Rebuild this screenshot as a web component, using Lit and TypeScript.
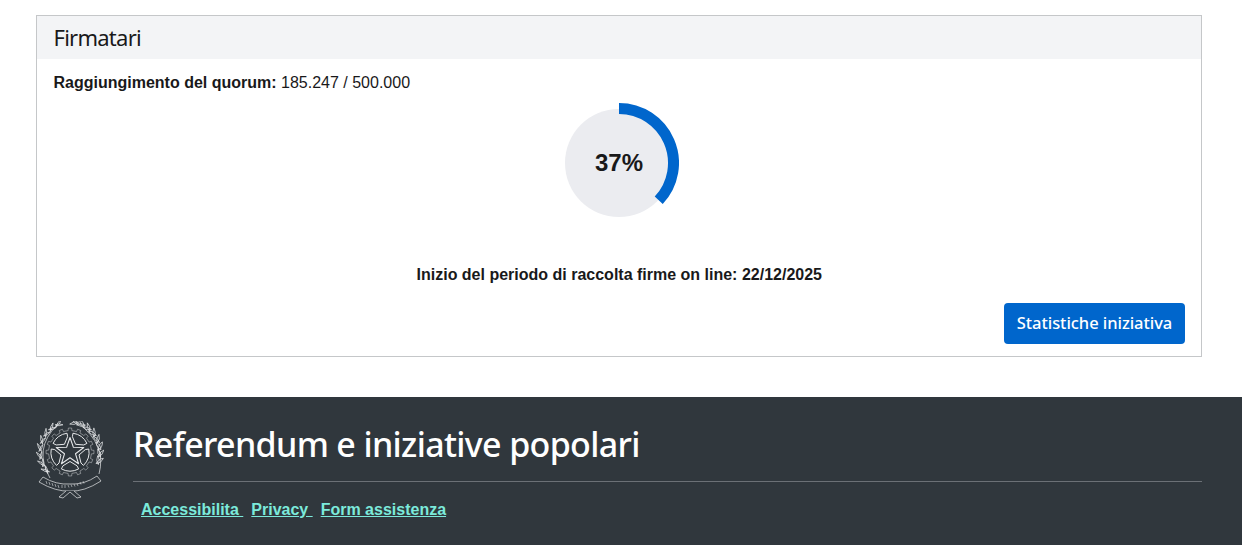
import { LitElement, html, css, svg } from "lit";
import { customElement } from "lit/decorators.js";

function arcPath(cx: number, cy: number, r: number, pct: number) {
  const a = (pct / 100) * Math.PI * 2;
  const x = cx + r * Math.sin(a);
  const y = cy - r * Math.cos(a);
  return `M ${cx} ${cy - r} A ${r} ${r} 0 ${pct > 50 ? 1 : 0} 1 ${x.toFixed(2)} ${y.toFixed(2)}`;
}

const CX = 34;
const CY = 31;
function polar(deg: number, r: number): string {
  const a = (deg * Math.PI) / 180;
  return `${(CX + r * Math.sin(a)).toFixed(2)} ${(CY - r * Math.cos(a)).toFixed(2)}`;
}

function starPath(R: number, r: number) {
  const pts: string[] = [];
  for (let i = 0; i < 10; i++) pts.push(polar(i * 36, i % 2 ? r : R));
  return `M${pts.join(" L")}z`;
}

function cellPath(gap: number) {
  return `M${polar(gap, 9.5)} L${polar(gap - 27, 15.5)} L${polar(gap - 27, 19)} Q${polar(gap, 21.5)} ${polar(gap + 27, 19)} L${polar(gap + 27, 15.5)}z`;
}

function gearPath() {
  const pts: string[] = [];
  const n = 16;
  for (let i = 0; i < n; i++) {
    const s = (360 / n) * i;
    pts.push(polar(s - 5, 21.5), polar(s - 4, 24), polar(s + 4, 24), polar(s + 5, 21.5));
  }
  return `M${pts.join(" L")}z`;
}

function leaf(deg: number, r: number, tilt: number, len: number, w: number) {
  const a = polar(deg, r).split(" ");
  return svg`<path transform="translate(${a[0]} ${a[1]}) rotate(${deg + tilt})" d="M0 0 Q${w} ${-len / 2} 0 ${-len} Q${-w} ${-len / 2} 0 0z"></path>`;
}

function emblem() {
  const left: number[] = [];
  for (let d = 226; d <= 336; d += 15) left.push(d);
  const right: number[] = [];
  for (let d = 16; d <= 122; d += 14) right.push(d);
  return svg`<svg class="emblem" width="68" height="78" viewBox="0 0 68 78" fill="none" stroke="#e6e8ea" stroke-width="0.7" stroke-linejoin="round" aria-hidden="true">
    <path d="M14 57 Q-3 28 21 4"></path>
    <path d="M63 53 Q71 24 42 2"></path>
    ${left.map((d) => svg`${leaf(d, 28.5, 62, 9, 2)}${leaf(d, 31, 118, 8, 1.8)}`)}
    ${right.map((d) => svg`${leaf(d, 28.5, -60, 9, 2.6)}${leaf(d, 31, -118, 9, 2.6)}`)}
    <path d=${gearPath()} stroke-width="0.6" opacity="0.75"></path>
    ${[36, 108, 180, 252, 324].map((g) => svg`<path d=${cellPath(g)} stroke-width="1"></path>`)}
    <path d=${starPath(14.5, 5.8)} fill="#30373d" stroke-width="1.1"></path>
    <path d="M7 56 Q20 64 34 63 Q48 64 61 55 L65 60 Q48 71 34 70 Q20 71 3 61z" fill="#30373d"></path>
    <path d="M10 60 l1 3 m2 -2 l1 3 m2 -2 l1 3 m2 -2 l1 3 m2 -2 l1 3 m3 -3 v3 m3 -3 v3 m3 -3 l1 2.500 m2 -3 l1 2.500 m2 -3 l1 2.500 m2 -3 l1 2.500 m2 -4 l1 2.500 m2 -3.500 l1 2.500" stroke-width="0.7" opacity="0.8"></path>
    <path d="M30 70 L23 76 L27 77 L34 71 L41 77 L45 76 L38 70" fill="#30373d"></path>
  </svg>`;
}

@customElement("app-root")
export class AppRoot extends LitElement {
  static styles = css`
    :host {
      display: block;
      font-family: "Liberation Sans", Arial, sans-serif;
      color: #19191a;
    }
    .page {
      display: flex;
      flex-direction: column;
      height: 545px;
      overflow: hidden;
    }
    .main {
      padding: 15px 40px 40px 36px;
    }
    .card {
      border: 1px solid #c5c7c9;
      height: 342px;
      box-sizing: border-box;
      display: flex;
      flex-direction: column;
    }
    .head {
      background: #f3f4f6;
      height: 43px;
      padding: 0 16.5px 2px;
      box-sizing: border-box;
      display: flex;
      align-items: center;
      font-family: "Noto Sans", sans-serif;
      font-size: 22px;
      font-weight: 400;
      letter-spacing: -0.75px;
    }
    .body {
      flex: 1;
      padding: 15px 16px 12px 16.5px;
      display: flex;
      flex-direction: column;
    }
    .quorum {
      font-size: 16px;
      line-height: 18px;
      margin: 0;
    }
    .donut {
      align-self: center;
      display: block;
      margin-top: 11px;
    }
    .donut text {
      font-size: 24px;
      font-weight: 700;
      fill: #19191a;
      font-family: "Liberation Sans", Arial, sans-serif;
    }
    .start {
      text-align: center;
      font-weight: 700;
      font-size: 16px;
      line-height: 18px;
      margin: 43px 0 0;
    }
    .actions {
      margin-top: auto;
      display: flex;
      justify-content: flex-end;
    }
    .btn {
      background: #0066cc;
      color: #fff;
      border: none;
      border-radius: 4px;
      height: 41px;
      width: 181px;
      padding: 0 0 2px;
      font-family: "Noto Sans", sans-serif;
      font-size: 16.5px;
      font-weight: 500;
      letter-spacing: -0.05px;
    }
    .footer {
      flex: 1;
      background: #30373d;
      display: flex;
      gap: 29px;
      padding: 24px 40px 0 36px;
    }
    .emblem {
      flex: none;
    }
    .info {
      flex: 1;
      display: flex;
      flex-direction: column;
    }
    .title {
      font-family: "Noto Sans", sans-serif;
      color: #fff;
      font-size: 34px;
      line-height: 46px;
      font-weight: 500;
      letter-spacing: -0.66px;
      height: 60px;
      border-bottom: 1px solid #6b7076;
    }
    .links {
      display: flex;
      gap: 8px;
      padding: 19px 0 0 8px;
      font-size: 16px;
      line-height: 18px;
      font-weight: 700;
    }
    .links a {
      color: #7ceadb;
      text-decoration: underline;
      white-space: pre;
    }
  `;

  render() {
    return html`<div class="page">
      <div class="main">
        <section class="card">
          <div class="head">Firmatari</div>
          <div class="body">
            <p class="quorum"><b>Raggiungimento del quorum:</b> 185.247 / 500.000</p>
            <svg class="donut" width="120" height="120" viewBox="0 0 120 120" role="img">
              <circle cx="60" cy="60" r="54" fill="#ebecf0"></circle>
              <path d=${arcPath(60, 60, 54.5, 37)} fill="none" stroke="#0066cc" stroke-width="11"></path>
              <text x="60" y="67.5" text-anchor="middle">37%</text>
            </svg>
            <p class="start">Inizio del periodo di raccolta firme on line: 22/12/2025</p>
            <div class="actions"><button class="btn">Statistiche iniziativa</button></div>
          </div>
        </section>
      </div>
      <footer class="footer">
        ${emblem()}
        <div class="info">
          <div class="title">Referendum e iniziative popolari</div>
          <nav class="links">
            <a href="#">Accessibilita </a>
            <a href="#">Privacy </a>
            <a href="#">Form assistenza</a>
          </nav>
        </div>
      </footer>
    </div>`;
  }
}
